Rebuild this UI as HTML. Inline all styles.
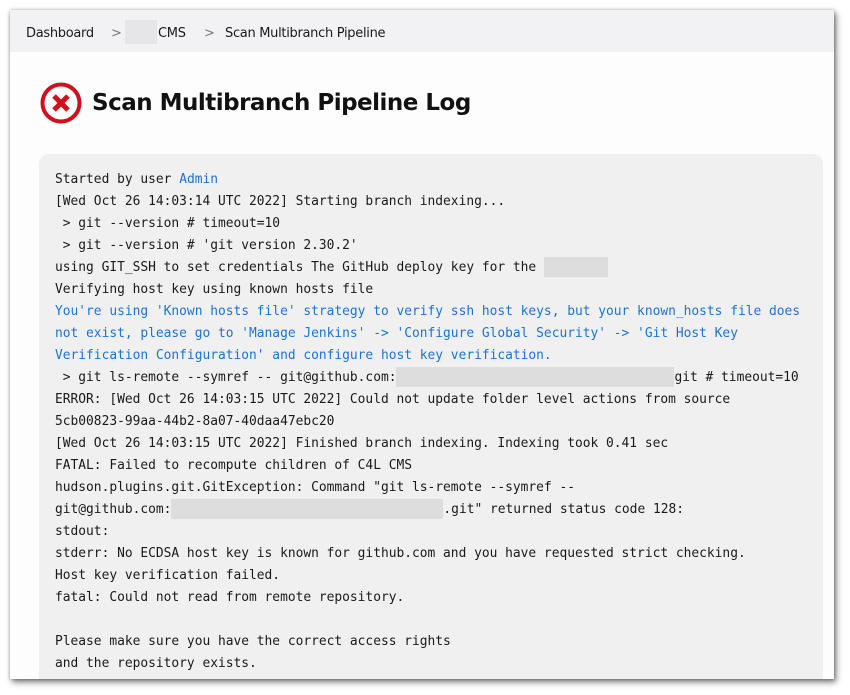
<!DOCTYPE html>
<html><head><meta charset="utf-8"><style>
html,body{margin:0;padding:0;width:850px;height:695px;overflow:hidden;background:#fff;}
.win{position:absolute;left:10px;top:10px;width:824px;height:669px;background:#fdfdfd;overflow:hidden;box-shadow:2px 3px 6px rgba(0,0,0,.55),0 0 3px rgba(0,0,0,.25);}
.bc{position:absolute;left:0;top:0;width:824px;height:42px;background:#f2f2f4;font-family:"DejaVu Sans","Liberation Sans",sans-serif;font-size:13px;color:#1a1a1a;}
.bc span{position:absolute;top:16px;white-space:nowrap;letter-spacing:-0.3px}
.sep{color:#777;font-size:13px}
h1{position:absolute;left:82px;top:80px;margin:0;font-family:"DejaVu Sans","Liberation Sans",sans-serif;font-weight:bold;font-size:23px;color:#111;letter-spacing:-0.5px;white-space:nowrap}
.log{position:absolute;left:29px;top:144px;width:784px;height:560px;background:#f0f0f0;border-radius:10px;}
pre{position:absolute;left:45px;top:159px;margin:0;font-family:"DejaVu Sans Mono","Liberation Mono",monospace;font-size:12.9px;line-height:22px;color:#1a1a1a;white-space:pre}
.b{color:#1a73d9}
.blur{display:inline-block;background:#ddd;height:20px;vertical-align:-6px}
</style></head><body>
<div class="win">
<div class="bc">
<span style="left:16px">Dashboard</span>
<span class="sep" style="left:101px">&gt;</span>
<span style="left:115px;top:10px;width:32px;height:24px;background:#e6e6e8;display:block"></span>
<span style="left:148px">CMS</span>
<span class="sep" style="left:194px">&gt;</span>
<span style="left:215px">Scan Multibranch Pipeline</span>
</div>
<svg style="position:absolute;left:29px;top:71px" width="44" height="44" viewBox="0 0 44 44"><circle cx="22" cy="22" r="18.5" fill="none" stroke="#d0101b" stroke-width="4"/><path d="M15 15L29 29M29 15L15 29" stroke="#d0101b" stroke-width="5" stroke-linecap="butt"/></svg>
<h1>Scan Multibranch Pipeline Log</h1>
<div class="log"></div>
<pre>Started by user <span class="b">Admin</span>
[Wed Oct 26 14:03:14 UTC 2022] Starting branch indexing...
 &gt; git --version # timeout=10
 &gt; git --version # 'git version 2.30.2'
using GIT_SSH to set credentials The GitHub deploy key for the <span class="blur" style="width:64px"></span>
Verifying host key using known hosts file
<span class="b">You're using 'Known hosts file' strategy to verify ssh host keys, but your known_hosts file does
not exist, please go to 'Manage Jenkins' -&gt; 'Configure Global Security' -&gt; 'Git Host Key
Verification Configuration' and configure host key verification.</span>
 &gt; git ls-remote --symref -- git@github.com:<span class="blur" style="width:278px"></span>git # timeout=10
ERROR: [Wed Oct 26 14:03:15 UTC 2022] Could not update folder level actions from source
5cb00823-99aa-44b2-8a07-40daa47ebc20
[Wed Oct 26 14:03:15 UTC 2022] Finished branch indexing. Indexing took 0.41 sec
FATAL: Failed to recompute children of C4L CMS
hudson.plugins.git.GitException: Command "git ls-remote --symref --
git@github.com:<span class="blur" style="width:272px"></span>.git" returned status code 128:
stdout:
stderr: No ECDSA host key is known for github.com and you have requested strict checking.
Host key verification failed.
fatal: Could not read from remote repository.

Please make sure you have the correct access rights
and the repository exists.
</pre>
</div>
</body></html>
